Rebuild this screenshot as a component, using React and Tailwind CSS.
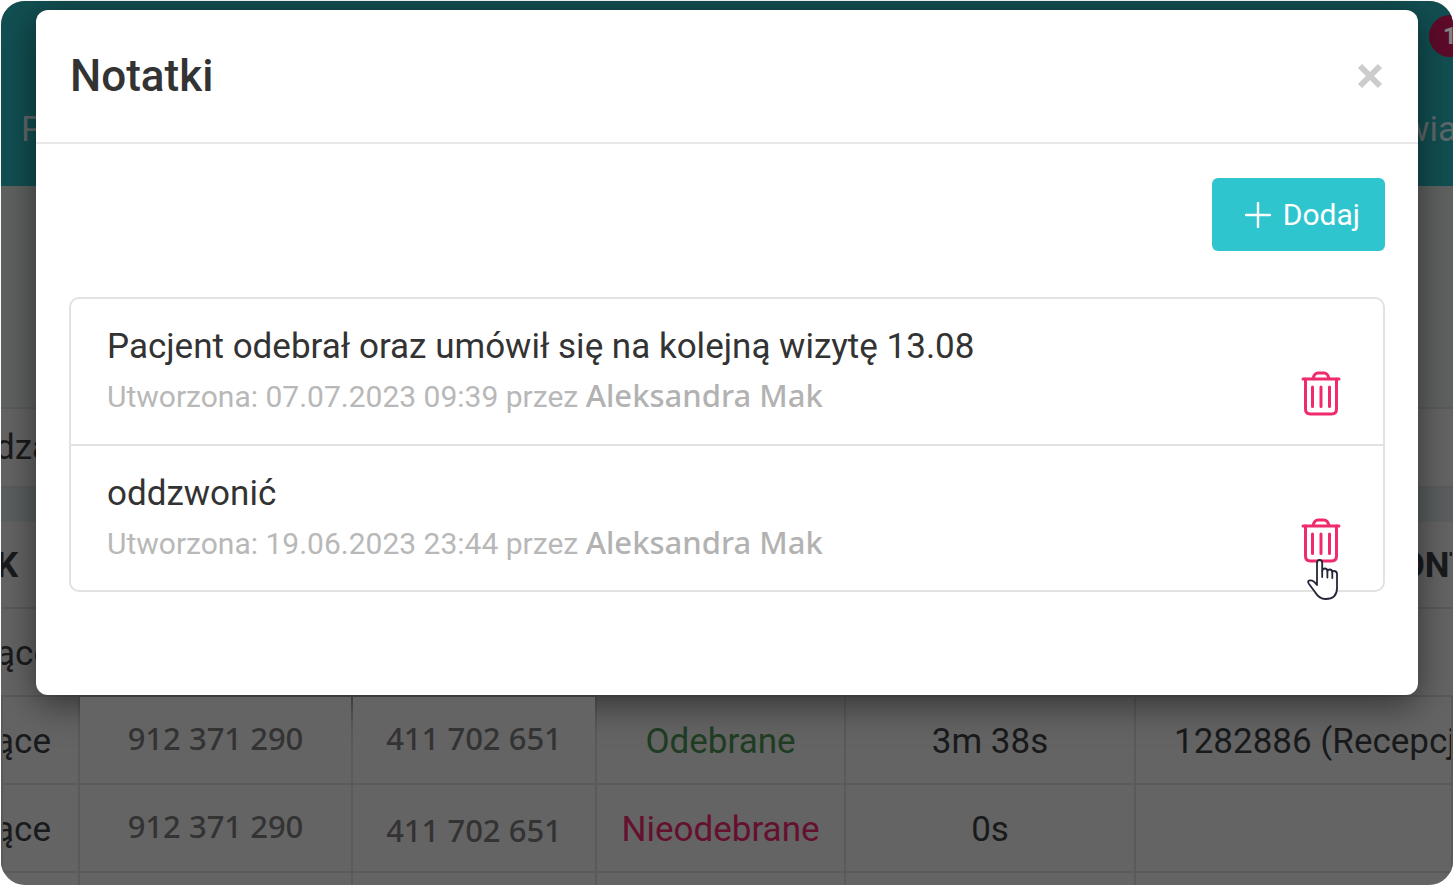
import React from "react";

const notes = [
  { id: 1, text: "Pacjent odebrał oraz umówił się na kolejną wizytę 13.08", date: "07.07.2023 09:39", author: "Aleksandra Mak" },
  { id: 2, text: "oddzwonić", date: "19.06.2023 23:44", author: "Aleksandra Mak" },
];

function TrashIcon() {
  return (
    <svg viewBox="0 0 40 46" className="h-[46px] w-10" fill="none" stroke="#ef2b6b" strokeWidth="3" strokeLinecap="round" strokeLinejoin="round" aria-hidden="true">
      <path d="M2 8H38" />
      <path d="M12 7.500C13 3.500 14.500 2 17 2H23C25.500 2 27 3.500 28 7.500" />
      <path d="M4.500 8V38Q4.500 43 9.500 43H30.500Q35.500 43 35.500 38V8" />
      <path d="M11.500 16V35.500M20 16V35.500M28.500 16V35.500" />
    </svg>
  );
}

function HandCursor() {
  return (
    <svg viewBox="0 0 32 42" className="pointer-events-none absolute left-[6px] top-[41px] h-[42px] w-8" fill="#fff" stroke="#25253a" strokeWidth="1.8" strokeLinejoin="round" strokeLinecap="round" aria-hidden="true">
      <path d="M10 23V4Q10 1 12.500 1Q15.200 1 15.200 4V12Q15.500 9.500 18 9.500Q20 9.500 20.500 12Q21 10.500 22.800 10.500Q25 10.500 25.300 13Q26 11.500 27.500 12Q30 12.500 30 15V29Q30 40 18.500 40Q12 40 8 33L2 25Q0 22 2.500 21.500Q6 20.500 10 26Z" />
      <path d="M15.200 12V18M20.400 12V18.500M25.300 13V19" fill="none" />
    </svg>
  );
}

function PhoneCell({ children, first, low }) {
  return (
    <td className="border-2 border-[#5a5a5a] p-0">
      <div className={"flex h-[86px] items-center justify-center bg-[#646464] font-['Noto_Sans',sans-serif] text-[31px] font-medium text-[#333] " + (first ? "relative z-20 " : "") + (low ? "pt-1" : "pb-1")}>
        {children}
      </div>
    </td>
  );
}

function CallRow({ first, status, statusClass, time, account }) {
  return (
    <tr className="h-[88px]">
      <td className="border-2 border-[#5a5a5a] p-0 pt-1">
        <div className="flex justify-end overflow-hidden pr-[27px]">Przychodzące</div>
      </td>
      <PhoneCell first={first}>912 371 290</PhoneCell>
      <PhoneCell first={first} low={!first}>411 702 651</PhoneCell>
      <td className={"border-2 border-[#5a5a5a] p-0 pt-1 text-center " + statusClass}>{status}</td>
      <td className="border-2 border-[#5a5a5a] p-0 pt-1 text-center">{time}</td>
      <td className="overflow-hidden whitespace-nowrap border-2 border-[#5a5a5a] p-0 pl-[38px] pt-1">{account}</td>
    </tr>
  );
}

export default function App() {
  return (
    <div className="relative h-screen overflow-hidden bg-white p-px font-[Roboto,sans-serif]">
      <div className="flex h-full flex-col overflow-hidden rounded-3xl bg-[#646464] text-[35px] leading-10 text-[#191a1c]">
        <header className="h-[185px] shrink-0 bg-[#124f52] text-[#60696a]">
          <div className="flex h-[70px] items-center justify-end overflow-hidden">
            <span className="-mr-[18px] flex h-[42px] w-[42px] items-center justify-center rounded-full bg-[#5d0b29] text-2xl font-bold text-[#848484]">1</span>
          </div>
          <nav className="flex h-[118px] items-center justify-between pl-5">
            <a href="#pacjenci">P</a>
            <a href="#powiadomienia" className="-mr-1">wia</a>
          </nav>
        </header>
        <div className="h-[221px] shrink-0 bg-[#606262]" />
        <div className="flex h-[81px] shrink-0 items-center border-y-2 border-[#5a5c5c]">
          <span className="-ml-1.5">dza</span>
        </div>
        <div className="h-[34px] shrink-0 bg-[#5b5f5f]" />
        <table className="w-full shrink-0 table-fixed border-collapse">
          <colgroup>
            <col className="w-[77px]" />
            <col className="w-[273px]" />
            <col className="w-[244px]" />
            <col className="w-[249px]" />
            <col className="w-[290px]" />
            <col />
          </colgroup>
          <thead>
            <tr className="h-[86px]">
              <th className="border-b-2 border-[#5a5a5a] p-0 pt-0.5 text-left font-bold"><span className="-ml-1.5">K</span></th>
              <th colSpan={4} className="border-b-2 border-[#5a5a5a] p-0" />
              <th className="overflow-hidden whitespace-nowrap border-b-2 border-[#5a5a5a] p-0 pl-[244px] pt-0.5 text-left font-bold">KONTO</th>
            </tr>
          </thead>
          <tbody>
            <tr className="h-[88px]">
              <td className="p-0 pt-1"><div className="flex justify-end overflow-hidden pr-[27px]">Przychodzące</div></td>
              <td colSpan={5} />
            </tr>
            <CallRow first status="Odebrane" statusClass="text-[#1e3d22]" time="3m 38s" account="1282886 (Recepcja)" />
            <CallRow status="Nieodebrane" statusClass="text-[#64102f]" time="0s" account="" />
            <tr className="h-[88px]">
              {[0, 1, 2, 3, 4, 5].map((i) => <td key={i} className="border-2 border-[#5a5a5a]" />)}
            </tr>
          </tbody>
        </table>
      </div>

      <div className="absolute inset-x-0 top-0 z-10 px-9 pt-[10px]">
        <section role="dialog" aria-labelledby="notes-title" className="rounded-xl bg-white pb-[103px] text-[#333] shadow-[0_9px_36px_rgba(0,0,0,0.5)]">
          <div className="flex h-[134px] items-center justify-between border-b-2 border-[#e8e8e8] px-[34px]">
            <h2 id="notes-title" className="text-[44px] font-medium leading-[52px]">Notatki</h2>
            <button type="button" aria-label="Zamknij" className="flex h-7 w-7 items-center justify-center">
              <svg viewBox="0 0 26 26" className="h-[26px] w-[26px]" stroke="#ccc" strokeWidth="6" aria-hidden="true">
                <path d="M3 3L23 23M23 3L3 23" />
              </svg>
            </button>
          </div>
          <div className="px-[33px] pt-[34px]">
            <div className="flex justify-end">
              <button type="button" className="flex h-[73px] w-[173px] items-center justify-end gap-3 rounded-md bg-[#2fc5ce] pr-[25px] text-[30px] leading-10 text-white">
                <svg viewBox="0 0 26 26" className="h-[26px] w-[26px]" stroke="#fff" strokeWidth="2.4" strokeLinecap="round" aria-hidden="true">
                  <path d="M13 1V25M1 13H25" />
                </svg>
                Dodaj
              </button>
            </div>
            <ul className="mt-[46px] rounded-[10px] border-2 border-[#e2e2e2]">
              {notes.map((note, i) => (
                <li key={note.id} className={"flex justify-between pl-9 pr-[42px] " + (i ? "h-[146px] border-t-2 border-[#e2e2e2]" : "h-[145px]")}>
                  <div className="pt-[26px]">
                    <p className="text-[35px] leading-[44px]">{note.text}</p>
                    <p className="text-[30px] leading-[52px] text-[#b8b8b8]">
                      Utworzona: {note.date} przez{" "}
                      <span className="font-['Noto_Sans',sans-serif] text-[31px] font-medium text-[#b2b2b2]">{note.author}</span>
                    </p>
                  </div>
                  <button type="button" aria-label="Usuń notatkę" className="relative mt-[72px] h-[46px] w-10">
                    <TrashIcon />
                    {i === 1 && <HandCursor />}
                  </button>
                </li>
              ))}
            </ul>
          </div>
        </section>
      </div>
    </div>
  );
}
